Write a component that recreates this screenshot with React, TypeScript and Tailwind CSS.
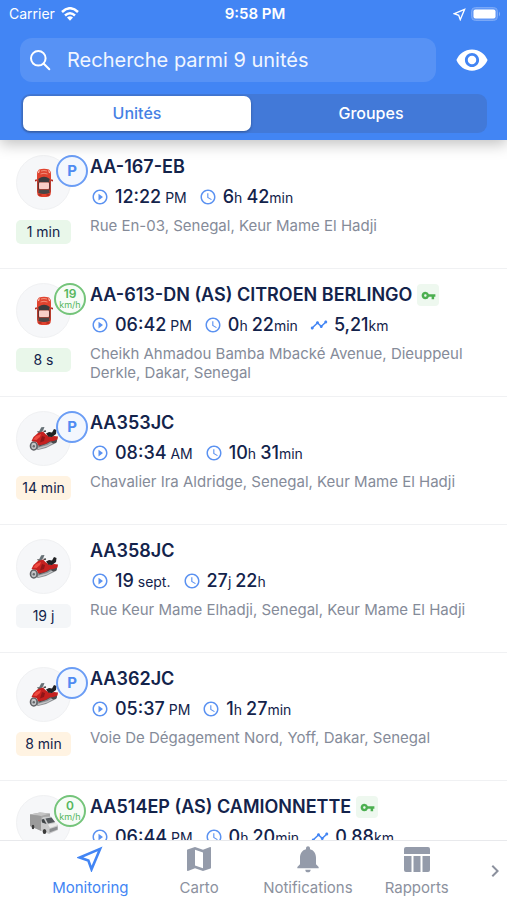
import type { ReactNode } from "react";
import { MdPlayCircleOutline, MdAccessTime, MdTimeline, MdVpnKey, MdMap, MdNotifications, MdVisibility, MdChevronRight } from "react-icons/md";

type Vehicle = "car" | "moto" | "truck";
type Amount = [string, string];

interface Unit {
  name: string;
  vehicle: Vehicle;
  badge?: "parked" | number;
  age: string;
  tone: "green" | "orange" | "grey";
  start: Amount;
  duration: Amount[];
  distance?: string;
  address: string;
  hasKey?: boolean;
}

const units: Unit[] = [
  { name: "AA-167-EB", vehicle: "car", badge: "parked", age: "1 min", tone: "green", start: ["12:22", " PM"], duration: [["6", "h"], ["42", "min"]], address: "Rue En-03, Senegal, Keur Mame El Hadji" },
  { name: "AA-613-DN (AS) CITROEN BERLINGO", vehicle: "car", badge: 19, age: "8 s", tone: "green", start: ["06:42", " PM"], duration: [["0", "h"], ["22", "min"]], distance: "5,21", address: "Cheikh Ahmadou Bamba Mbacké Avenue, Dieuppeul Derkle, Dakar, Senegal", hasKey: true },
  { name: "AA353JC", vehicle: "moto", badge: "parked", age: "14 min", tone: "orange", start: ["08:34", " AM"], duration: [["10", "h"], ["31", "min"]], address: "Chavalier Ira Aldridge, Senegal, Keur Mame El Hadji" },
  { name: "AA358JC", vehicle: "moto", age: "19 j", tone: "grey", start: ["19", " sept."], duration: [["27", "j"], ["22", "h"]], address: "Rue Keur Mame Elhadji, Senegal, Keur Mame El Hadji" },
  { name: "AA362JC", vehicle: "moto", badge: "parked", age: "8 min", tone: "orange", start: ["05:37", " PM"], duration: [["1", "h"], ["27", "min"]], address: "Voie De Dégagement Nord, Yoff, Dakar, Senegal" },
  { name: "AA514EP (AS) CAMIONNETTE", vehicle: "truck", badge: 0, age: "", tone: "green", start: ["06:44", " PM"], duration: [["0", "h"], ["20", "min"]], distance: "0,88", address: "", hasKey: true },
];

const tones = {
  green: "bg-[#e9f7ea]",
  orange: "bg-[#fff3e2]",
  grey: "bg-[#f4f6f8]",
};

function Car() {
  return (
    <svg viewBox="0 0 20 30" className="h-[30px] w-5" aria-hidden="true">
      <path d="M2.500 11 1 12v1.500L3 13zM17.500 11l1.500 1v1.500L17 13z" fill="#b3261d" />
      <path d="M5 1.600Q10 0 15 1.600 17 3 17 7v17q0 3.500-2.200 4.500-4.800 1-9.600 0Q3 27.500 3 24V7Q3 3 5 1.600z" fill="#e0432f" />
      <path d="M3.800 5Q4 2.500 6 2L5 5zM16.200 5Q16 2.500 14 2l1 3z" fill="#fbc0b0" />
      <path d="M4.200 11Q10 6.500 15.800 11L15 14.500H5z" fill="#3a3a3c" />
      <path d="M3.700 12 4.900 15v6l-1.200 3zM16.300 12 15.100 15v6l1.200 3z" fill="#5a3030" />
      <rect x="5" y="14.500" width="10" height="6.500" rx="1" fill="#f8cfc8" />
      <path d="M5 21.500h10l.8 3.500q-5.800 2-11.600 0z" fill="#4a4646" />
      <path d="M4.500 27h3M12.500 27h3" stroke="#9d1b12" />
      <path d="M7 3Q10 2 13 3M6.500 6Q10 4.500 13.500 6" stroke="#f2907b" fill="none" />
    </svg>
  );
}

function Moto() {
  return (
    <svg viewBox="0 0 30 26" className="h-[26px] w-[30px]" aria-hidden="true">
      <path d="m5 22 6-7 11-2 5 2-2 3-8 4-8 2z" fill="#8d9093" />
      <path d="m9 22.500 9-2.500 7-4" stroke="#c3c5c7" strokeWidth="1.300" fill="none" />
      <path d="m10 20 8-3 5-3" stroke="#4c4e51" strokeWidth="1.200" fill="none" />
      <ellipse cx="4.800" cy="20" rx="3.300" ry="4" fill="#c3c4c6" stroke="#606266" strokeWidth="1.600" />
      <circle cx="4.800" cy="20.200" r="1.200" fill="#66686c" />
      <circle cx="25" cy="14.500" r="3" fill="#494b4e" />
      <path d="M9.500 6.500 12.300 1.200 15.500 1l-1.200 3-3.300 4z" fill="#667075" />
      <path d="m8.500 5.500 2 1M14.500 5.500l2.500-.5" stroke="#444" strokeWidth="1.300" />
      <path d="m2.500 15 2-4L9 7l5-1.500 3 3 4 2.500 4-1 4 .5-.5 3-4 1.500-4 .5-4 2.500-7 1.500L7.500 16z" fill="#c5201f" />
      <path d="m4 13.500 3-3.500 5-2-1 3-3.500 3z" fill="#ee4a40" />
      <path d="m13 10 3 1-1 4-4 1.500z" fill="#8f1517" />
      <path d="m17 7.500 3-1.500 3 .5L25 3l2.500 1-.5 4-4 3-3.500-.3z" fill="#202124" />
    </svg>
  );
}

function Truck() {
  return (
    <svg viewBox="0 0 30 24" className="h-6 w-[30px]" aria-hidden="true">
      <path d="m1 3.500 10-2 10 1V14l-9 6L1 15z" fill="#a6a6a6" />
      <path d="m1 3.500 10-2 10 1-9 2.500z" fill="#c4c4c4" />
      <path d="M1 3.500 12 5v14.500L1 15z" fill="#9b9b9b" />
      <path d="M12 8.500 14 6l8-.5 4 6 3 2.500v5l-9 4-8-3.500z" fill="#c9cacb" />
      <path d="m16.500 7.500 6-1L26 11l-7 1.500z" fill="#53585c" />
      <path d="m12.500 8.500 2.500-.5 2.500 5-4.500-1.500z" fill="#3f4447" />
      <path d="m19 13.500 7.500-1.500 2.500 2-8 3z" fill="#ececec" />
      <path d="m20.500 18 8-2.500v3l-8 3z" fill="#8b8d90" />
      <ellipse cx="4" cy="16" rx="1.300" ry="2.200" fill="#3b3b3b" />
      <ellipse cx="15.500" cy="20.500" rx="1.800" ry="2.600" fill="#3b3b3b" />
    </svg>
  );
}

const vehicles: Record<Vehicle, ReactNode> = { car: <Car />, moto: <Moto />, truck: <Truck /> };

function PlaneArrow({ className, width }: { className: string; width: number }) {
  return (
    <svg viewBox="0 0 24 24" className={className} fill="none" stroke="currentColor" strokeWidth={width} strokeLinejoin="miter" aria-hidden="true">
      <path d="M21.300 2.700 2.500 10.600l8 2.900 2.900 8z" />
    </svg>
  );
}

function Figure({ value }: { value: Amount }) {
  return (
    <span>
      <span className="text-lg leading-6 font-medium">{value[0]}</span>
      <span className="text-sm whitespace-pre">{value[1]}</span>
    </span>
  );
}

function UnitRow({ unit }: { unit: Unit }) {
  return (
    <li className="flex min-h-32 items-start border-b border-[#f0f1f3] px-4">
      <div className="relative flex w-[55px] shrink-0 flex-col gap-[10px] pt-[14px]">
        <div className="flex h-[55px] items-center justify-center rounded-full border border-[#f0f1f3] bg-[#f6f7f9]">{vehicles[unit.vehicle]}</div>
        {unit.age && <span className={`rounded-[5px] text-center text-sm leading-6 ${tones[unit.tone]}`}>{unit.age}</span>}
        {unit.badge === "parked" && (
          <span className="absolute top-[14px] left-10 flex size-8 items-center justify-center rounded-full border-2 border-[#6b9df5] bg-[#f3f7fe] text-[15px] font-bold text-[#4f8bf2]">P</span>
        )}
        {typeof unit.badge === "number" && (
          <span className="absolute top-[14px] left-[38px] flex size-8 flex-col items-center justify-center rounded-full border-2 border-[#74c47a] bg-[#f7fcf7] text-[#55b65c]">
            <span className="text-xs leading-[11px] font-semibold">{unit.badge}</span>
            <span className="text-[9px] leading-[11px]">km/h</span>
          </span>
        )}
      </div>
      <div className="min-w-0 flex-1 pt-[14px] pl-[19px]">
        <div className="flex h-6 items-center gap-[5px]">
          <h2 className="text-lg leading-6 font-semibold whitespace-nowrap">{unit.name}</h2>
          {unit.hasKey && (
            <span className="flex size-[22px] items-center justify-center rounded bg-[#eef8ef]">
              <MdVpnKey className="size-[15px] text-[#4caf50]" />
            </span>
          )}
        </div>
        <div className="mt-[6px] flex h-6 items-center">
          <MdPlayCircleOutline className="mr-[6px] ml-px size-[18px] text-[#5b92f1]" />
          <Figure value={unit.start} />
          <MdAccessTime className="mr-[6px] ml-3 size-[18px] text-[#5b92f1]" />
          <span className="flex gap-1">
            {unit.duration.map((part) => (
              <Figure key={part[1]} value={part} />
            ))}
          </span>
          {unit.distance && (
            <>
              <MdTimeline className="mr-[6px] ml-3 size-[18px] text-[#4285f4]" />
              <Figure value={[unit.distance, "km"]} />
            </>
          )}
        </div>
        <p className="mt-[7px] text-[15px] leading-[19px] text-[#858b99]">{unit.address}</p>
      </div>
    </li>
  );
}

function StatusBar() {
  return (
    <div className="grid h-7 grid-cols-3 items-center pr-[6px] pl-[9px] text-[15px]">
      <div className="flex items-center gap-[6px]">
        <span className="text-sm">Carrier</span>
        <svg viewBox="0 0 18 14" className="h-[14px] w-[18px]" fill="none" stroke="currentColor" strokeWidth="2.500" aria-hidden="true">
          <path d="M1 5q8-7.500 16 0M4 8.500q5-4.500 10 0" />
          <path d="M6 10.500q3-2.500 6 0L9 13.700z" fill="currentColor" stroke="none" />
        </svg>
      </div>
      <span className="text-center font-semibold">9:58 PM</span>
      <div className="flex items-center justify-end gap-[5px]">
        <PlaneArrow className="size-[13px]" width={2.5} />
        <svg viewBox="0 0 30 14" className="h-[14px] w-[30px]" aria-hidden="true">
          <rect x="0.500" y="0.500" width="26" height="13" rx="4" fill="#6298f6" stroke="#7aa8f7" />
          <rect x="2.500" y="2.500" width="22" height="9" rx="2" fill="#fff" />
          <path d="M28 4.500q2 2.500 0 5z" fill="#8ab2f8" />
        </svg>
      </div>
    </div>
  );
}

const tab = "flex min-w-0 flex-col items-center pt-[2px] text-[15px] leading-5";
const tabIcon = "mb-[3px] flex h-8 items-center";

export default function App() {
  return (
    <div className="flex h-screen flex-col overflow-hidden bg-white font-['Inter','Liberation_Sans',sans-serif] text-[#13234b]">
      <header className="relative z-10 shrink-0 bg-[#4285f4] pb-[7px] text-white shadow-[0_4px_14px_rgba(0,0,0,0.25)]">
        <StatusBar />
        <div className="mt-[10px] flex items-center gap-5 pr-[19px] pl-5">
          <label className="flex h-11 min-w-0 flex-1 items-center rounded-xl bg-[#5792f5] pl-2">
            <svg viewBox="0 0 24 24" className="size-6 shrink-0" fill="none" stroke="currentColor" strokeWidth="2" strokeLinecap="round" aria-hidden="true">
              <circle cx="10.300" cy="10.300" r="7.300" />
              <path d="m15.800 15.800 5.500 5.500" />
            </svg>
            <input type="search" aria-label="Recherche" placeholder="Recherche parmi 9 unités" className="ml-[15px] w-full min-w-0 bg-transparent text-xl outline-none placeholder:text-[#f1f6ff]" />
          </label>
          <button type="button" aria-label="Afficher" className="flex w-8 justify-center">
            <MdVisibility className="size-[34px] shrink-0" />
          </button>
        </div>
        <div className="mr-5 ml-[21px] mt-3 grid grid-cols-2 gap-[6px] rounded-[9px] bg-[#4279d8] p-[2px] text-base leading-[35px] font-medium">
          <button type="button" className="rounded-[7px] bg-white text-[#4580e4] shadow-[0_1px_3px_rgba(0,0,0,0.3)]">Unités</button>
          <button type="button">Groupes</button>
        </div>
      </header>
      <main className="min-h-0 flex-1 overflow-hidden pt-px">
        <ul>
          {units.map((unit) => (
            <UnitRow key={unit.name} unit={unit} />
          ))}
        </ul>
      </main>
      <nav className="grid h-[60px] shrink-0 grid-cols-[repeat(4,1fr)_36px] border-t border-[#e8e9ec] bg-white pl-9 text-[#8c919e]">
        <button type="button" className={`${tab} text-[#4285f4]`}>
          <span className={tabIcon}>
            <PlaneArrow className="size-[26px]" width={2.4} />
          </span>
          <span>Monitoring</span>
        </button>
        <button type="button" className={tab}>
          <span className={tabIcon}>
            <MdMap className="size-8 text-[#949baa]" />
          </span>
          <span>Carto</span>
        </button>
        <button type="button" className={tab}>
          <span className={tabIcon}>
            <MdNotifications className="size-8 text-[#949baa]" />
          </span>
          <span>Notifications</span>
        </button>
        <button type="button" className={tab}>
          <span className={tabIcon}>
            <svg viewBox="0 0 26 25" className="h-[25px] w-[26px] text-[#949baa]" fill="currentColor" aria-hidden="true">
              <path d="M2 0h22a2 2 0 0 1 2 2v5H0V2a2 2 0 0 1 2-2zM0 9h7.500v16H2a2 2 0 0 1-2-2zM9.500 9h7v16h-7zM18.500 9H26v14a2 2 0 0 1-2 2h-5.500z" />
            </svg>
          </span>
          <span>Rapports</span>
        </button>
        <button type="button" aria-label="Suivant" className="flex items-center justify-end">
          <MdChevronRight className="size-6" />
        </button>
      </nav>
    </div>
  );
}
